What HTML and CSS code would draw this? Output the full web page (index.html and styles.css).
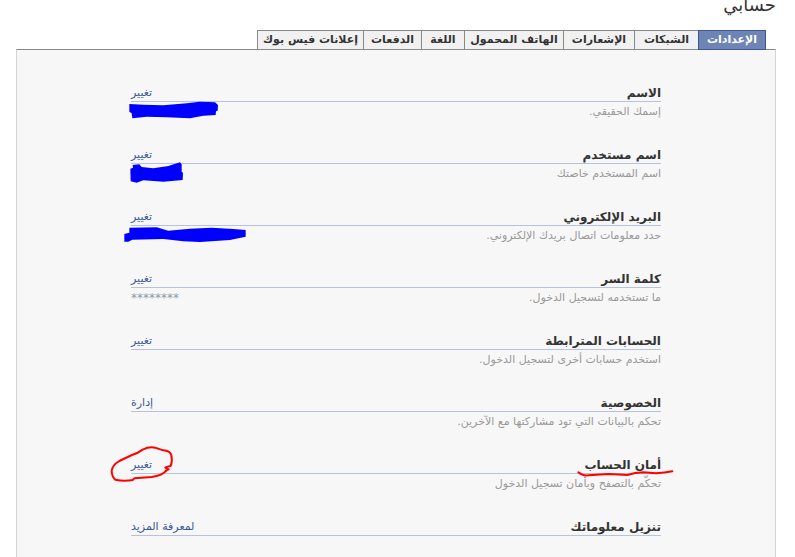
FILE: index.html
```html
<!DOCTYPE html>
<html lang="ar" dir="rtl">
<head>
    <meta charset="UTF-8">
    <meta name="viewport" content="width=device-width, initial-scale=1.0">
    <title>حسابي</title>
    <link rel="stylesheet" href="styles.css">
</head>
<body>
    <h1>حسابي</h1>
    <nav class="tabs">
        <a href="#" class="active">الإعدادات</a>
        <a href="#">الشبكات</a>
        <a href="#">الإشعارات</a>
        <a href="#">الهاتف المحمول</a>
        <a href="#">اللغة</a>
        <a href="#">الدفعات</a>
        <a href="#">إعلانات فيس بوك</a>
    </nav>
    <main class="panel">
        <section class="row">
            <div class="head"><h2>الاسم</h2><a href="#">تغيير</a></div>
            <div class="desc"><p>إسمك الحقيقي.</p></div>
            <svg class="mark ink-name" viewBox="84 60 276 60"><path d="M88 72L130 74L190 76L260 70L300 65L345 67L354 75L353 92L348 94L347 105L310 107L270 115L200 112L140 110L97 115L95 100L88 95Z"/></svg>
        </section>
        <section class="row">
            <div class="head"><h2>اسم مستخدم</h2><a href="#">تغيير</a></div>
            <div class="desc"><p>اسم المستخدم خاصتك</p></div>
            <svg class="mark ink-user" viewBox="84 246 168 66"><path d="M91 266L99 263L98 255L118 253L125 261L160 265L205 258L240 247L245 253L245 275L249 278L248 300L190 305L130 301L110 308L92 304Z"/></svg>
        </section>
        <section class="row">
            <div class="head"><h2>البريد الإلكتروني</h2><a href="#">تغيير</a></div>
            <div class="desc"><p>حدد معلومات اتصال بريدك الإلكتروني.</p></div>
            <svg class="mark ink-mail" viewBox="69 78 372 51"><path d="M73 102L88 98L88 83L170 82L205 92L270 86L335 83L400 87L437 90L437 110L390 120L300 126L250 124L190 117L97 119L85 125L73 125Z"/></svg>
        </section>
        <section class="row">
            <div class="head"><h2>كلمة السر</h2><a href="#">تغيير</a></div>
            <div class="desc"><p>ما تستخدمه لتسجيل الدخول.</p><span class="stars">********</span></div>
        </section>
        <section class="row">
            <div class="head"><h2>الحسابات المترابطة</h2><a href="#">تغيير</a></div>
            <div class="desc"><p>استخدم حسابات أخرى لتسجيل الدخول.</p></div>
        </section>
        <section class="row">
            <div class="head"><h2>الخصوصية</h2><a href="#">إدارة</a></div>
            <div class="desc"><p>تحكم بالبيانات التي تود مشاركتها مع الآخرين.</p></div>
        </section>
        <section class="row">
            <div class="head"><h2>أمان الحساب</h2><a href="#">تغيير</a></div>
            <div class="desc"><p>تحكّم بالتصفح وبأمان تسجيل الدخول</p></div>
            <svg class="mark red-ring" viewBox="30 30 192 114"><path d="M197 107L206 103L196 98Q202 94 212 93Q218 78 214 61Q211 47 190 46L165 38Q148 34 128 44Q112 56 96 60L58 78Q37 90 35 108Q36 126 46 134Q72 140 98 135L103 130L155 126Q187 121 200 106"/></svg>
            <svg class="mark red-line" viewBox="408 87 294 27"><path d="M415 97Q428 108 445 106Q475 104 505 102Q540 103 562 105Q585 98 610 97Q660 103 697 94"/></svg>
        </section>
        <section class="row">
            <div class="head"><h2>تنزيل معلوماتك</h2><a href="#">لمعرفة المزيد</a></div>
        </section>
    </main>
</body>
</html>
```
FILE: styles.css
```css
* { box-sizing: border-box; }
html { height: 100%; overflow: hidden; }
body { margin: 0; padding: 0 19px 0 16px; min-height: 100%; display: flex; flex-direction: column; background: #fff; color: #333; font: 11px/20px "DejaVu Sans", sans-serif; }
h1, h2, p { margin: 0; }
a { color: #3b5998; text-decoration: none; }
h1 { font-size: 18px; font-weight: normal; line-height: 10px; margin-bottom: 20px; }

/* tabs */
.tabs { display: grid; grid-template-columns: 68px 64px 71px 99px 43px 58px 106px; padding: 0 10px; }
.tabs a { height: 19px; line-height: 18px; border: 1px solid #898989; border-bottom: 0; border-right: 0; background: #f1f1f1; color: #333; font-weight: bold; text-align: center; white-space: nowrap; }
.tabs a.active { position: relative; height: 20px; margin-bottom: -1px; background: #6d84b4; border: 1px solid #3b5998; color: #fff; }

/* settings list */
.panel { flex: 1; padding: 30px 114px 0; background: #f7f7f7; border: 1px solid #d4d4d4; border-top-color: #898989; border-bottom: 0; }
.row { position: relative; margin-bottom: 20px; }
.head { display: flex; justify-content: space-between; height: 22px; line-height: 26px; border-bottom: 1px solid #b7c2dc; }
.head h2 { font-size: 12px; line-height: 26px; }
.desc { display: flex; justify-content: space-between; height: 20px; color: #999; white-space: nowrap; }
.stars { color: #8d9aaa; font-size: 12px; }

/* pen marks */
.mark { position: absolute; fill: #00f; }
.ink-name { left: -3px; top: 20px; width: 92px; height: 20px; }
.ink-user { left: -3px; top: 20px; width: 56px; height: 22px; }
.ink-mail { left: -8px; top: 22px; width: 124px; height: 17px; }
.red-ring, .red-line { fill: none; stroke: #f00; stroke-width: 6; stroke-linecap: round; stroke-linejoin: round; }
.red-ring { left: -21px; top: -7px; width: 64px; height: 38px; }
.red-line { right: -13px; top: 17px; width: 98px; height: 9px; }
```
